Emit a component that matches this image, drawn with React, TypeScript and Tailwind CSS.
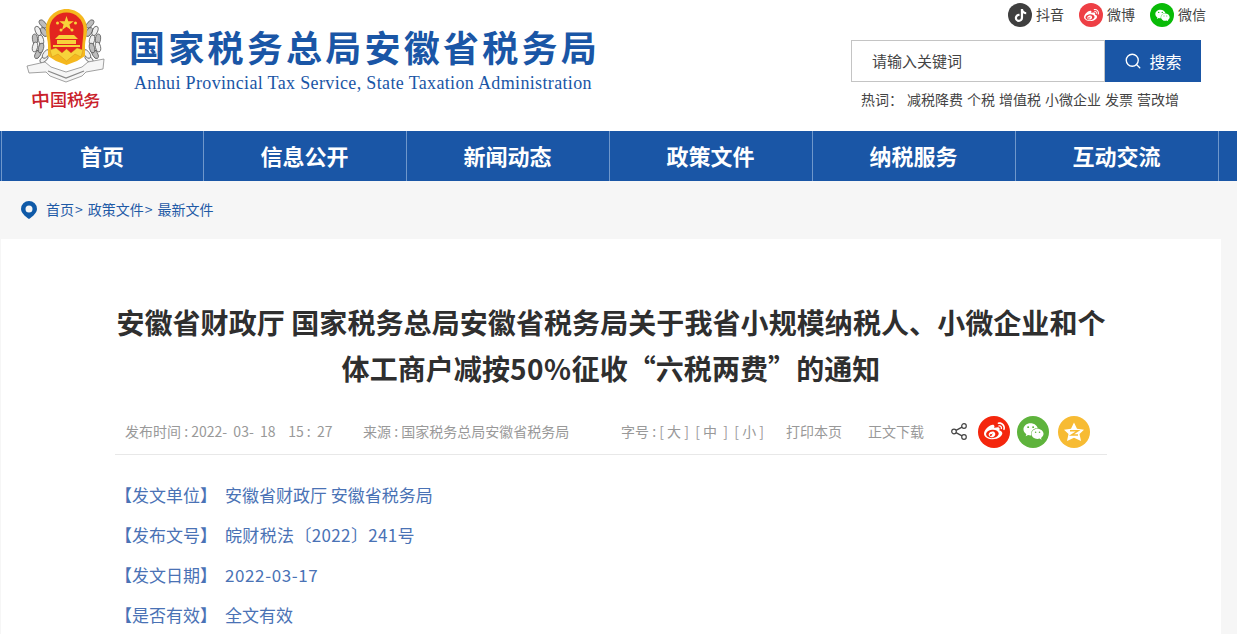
// App.tsx
import { Search } from 'lucide-react';
import { FaTiktok, FaWeibo, FaWeixin } from 'react-icons/fa';

const font = "font-['Noto_Sans_CJK_SC','Liberation_Sans',sans-serif]";

const navItems = ['首页', '信息公开', '新闻动态', '政策文件', '纳税服务', '互动交流'];
const hotWords = ['减税降费', '个税', '增值税', '小微企业', '发票', '营改增'];
const metaRows = [
  ['【发文单位】', '安徽省财政厅 安徽省税务局', ''],
  ['【发布文号】', '皖财税法〔2022〕241号', 'tracking-[0.35px]'],
  ['【发文日期】', '2022-03-17', 'tracking-[0.6px]'],
  ['【是否有效】', '全文有效', ''],
];

// wreath leaves, mirrored around the badge
const leaves = [
  [17, 17, -40], [12, 24, -22], [9, 32, -6], [9, 40, 10], [12, 47, 28], [18, 52, 48],
  [18, 25, -30], [15, 33, -10], [15, 41, 12], [20, 47, 35],
];

function Emblem() {
  return (
    <svg width="82" height="106" viewBox="0 0 82 106" className="block">
      {/* wreath */}
      {leaves.map(([x, y, r], i) => (
        <g key={i}>
          <ellipse cx={x} cy={y} rx="2.600" ry="5" transform={`rotate(${r} ${x} ${y})`} fill={i % 2 ? '#efefef' : '#bdbdbd'} stroke="#4a4a4a" strokeWidth="0.700" />
          <ellipse cx={81 - x} cy={y} rx="2.600" ry="5" transform={`rotate(${-r} ${81 - x} ${y})`} fill={i % 2 ? '#efefef' : '#bdbdbd'} stroke="#4a4a4a" strokeWidth="0.700" />
        </g>
      ))}
      {/* ribbon */}
      <path d="M1 59 L19 55 L25 60 L40 65 L56 60 L62 55 L78 52 L77 62 L60 65 L56 69 L40 75 L24 69 L20 65 L3 66 Z" fill="#f6f6f6" stroke="#8a8a8a" strokeWidth="0.800" />
      <path d="M22 64 L40 71 L58 64" fill="none" stroke="#888" strokeWidth="1.300" />
      {/* badge */}
      <path d="M40.500 2 C29 2 20 11 20 22 C20 29 22 34 22 38 L22 49 L30 54 L40.500 58 L51 54 L59 49 L59 38 C59 34 61 29 61 22 C61 11 52 2 40.500 2 Z" fill="#f5b81e" />
      <path d="M40.500 5.500 C31 5.500 23.500 13 23.500 22 C23.500 30 25 36 25 46 L56 46 C56 36 57.500 30 57.500 22 C57.500 13 50 5.500 40.500 5.500 Z" fill="#e3241f" />
      <polygon points="40.500,9 42.300,14.300 47.800,14.300 43.400,17.600 45,22.900 40.500,19.700 36,22.900 37.600,17.600 33.200,14.300 38.700,14.300" fill="#f7d23a" />
      <circle cx="31.500" cy="16" r="1.500" fill="#f7d23a" />
      <circle cx="49.500" cy="16" r="1.500" fill="#f7d23a" />
      <circle cx="35" cy="23" r="1.500" fill="#f7d23a" />
      <circle cx="46" cy="23" r="1.500" fill="#f7d23a" />
      {/* gate */}
      <path d="M33 28 L48 28 L52 32 L29 32 Z M31 33 L50 33 L50 37 L31 37 Z M27 38 L54 38 L54 40 L27 40 Z" fill="#f7d23a" />
      <path d="M24 43 L30 41 L36 46 L40.500 42 L45 46 L51 41 L57 43 L55 50 L49 47 L40.500 54 L32 47 L26 50 Z" fill="#f7d23a" stroke="#c9861a" strokeWidth="0.400" />
      {/* calligraphy */}
      <g fontFamily="Noto Sans CJK SC, sans-serif" fontWeight="500" fill="#c9202a">
        <text x="5" y="100" fontSize="19" transform="rotate(-4 14 92)">中</text>
        <text x="24" y="99" fontSize="17">国</text>
        <text x="41" y="99" fontSize="17" transform="rotate(-6 49 92)">税</text>
        <text x="57" y="100" fontSize="17" transform="rotate(-6 65 92)">务</text>
      </g>
    </svg>
  );
}

function PinIcon() {
  return (
    <svg width="16" height="18" viewBox="0 0 16 18">
      <path fillRule="evenodd" d="M8 0a8 8 0 0 1 8 8c0 3.600-4 7.400-8 10C4 15.400 0 11.600 0 8a8 8 0 0 1 8-8Zm0 4.500a3.500 3.500 0 1 0 0 7 3.500 3.500 0 0 0 0-7Z" fill="#0f5aa8" />
    </svg>
  );
}

function ShareIcon() {
  return (
    <svg width="16" height="17" viewBox="0 0 16 17" fill="none" stroke="#444" strokeWidth="1.200">
      <circle cx="3" cy="8.500" r="2.300" />
      <circle cx="13" cy="3" r="2.300" />
      <circle cx="13" cy="14" r="2.300" />
      <path d="M5 7.400 11 4.100M5 9.600 11 12.900" />
    </svg>
  );
}

function QzoneIcon() {
  return (
    <svg width="22" height="22" viewBox="0 0 22 22">
      <path d="M11 1.500 14 7.800 21 8.700 16.500 13 18 20 11 16.700 4 20 5.500 13 1 8.700 8 7.800Z" fill="#fff" />
      <path d="M7 9.800H15L8.500 14H15" fill="none" stroke="#f7bb33" strokeWidth="1.500" />
    </svg>
  );
}

export default function App() {
  return (
    <div className={`h-[634px] overflow-hidden bg-[#f6f6f6] ${font}`}>
      {/* Header */}
      <header className="flex h-[131px] justify-between bg-white">
        <div className="flex pl-[26px] pt-[7px]">
          <Emblem />
          <div className="ml-[21px] pt-[15px]">
            <h1 className="text-[36px] leading-[48px] font-bold tracking-[3.250px] text-[#1a56a6]">国家税务总局安徽省税务局</h1>
            <p className="mt-[1px] pl-[5px] font-['Liberation_Serif',serif] text-[18px] leading-[24px] tracking-[0.35px] text-[#1a56a6]">
              Anhui Provincial Tax Service, State Taxation Administration
            </p>
          </div>
        </div>

        <div className="w-[386px]">
          <div className="flex justify-end gap-[15px] pt-[3px] pr-[31px] text-[14px] leading-[20px] text-[#444]">
            <span className="flex items-center gap-[4px]">
              <span className="flex size-[24px] items-center justify-center rounded-full bg-[#3f3f3f] text-white"><FaTiktok size={13} /></span>
              <span className="pb-[2px]">抖音</span>
            </span>
            <span className="flex items-center gap-[4px]">
              <span className="flex size-[24px] items-center justify-center rounded-full bg-[#ee3f45] text-white"><FaWeibo size={15} /></span>
              <span className="pb-[2px]">微博</span>
            </span>
            <span className="flex items-center gap-[4px]">
              <span className="flex size-[24px] items-center justify-center rounded-full bg-[#09bb07] text-white"><FaWeixin size={15} /></span>
              <span className="pb-[2px]">微信</span>
            </span>
          </div>
          <div className="mt-[13px] flex h-[42px] w-[350px]">
            <div className="flex flex-1 items-center border border-[#c4c4c4] pl-[20px] text-[15px] text-[#444]">请输入关键词</div>
            <div className="flex w-[96px] items-center justify-center gap-[7px] bg-[#1a56a6] text-[16px] text-white">
              <Search size={18} strokeWidth={1.800} />
              搜索
            </div>
          </div>
          <div className="mt-[7px] flex pl-[10px] text-[14px] leading-[20px] text-[#444]">
            <span className="mr-[4px]">热词：</span>
            <span className="flex gap-[4px]">
              {hotWords.map(w => <span key={w}>{w}</span>)}
            </span>
          </div>
        </div>
      </header>

      {/* Nav */}
      <nav className="flex h-[50px] bg-[#1a56a6] pl-[1px]">
        {navItems.map((item, i) => (
          <div key={item} className={`flex items-center justify-center border-l border-[#6f97cb] pr-[1px] pb-[2px] text-[22px] font-bold text-white ${i === 0 ? 'w-[202px]' : 'w-[203px]'}`}>
            {item}
          </div>
        ))}
        <div className="w-[18px] border-l border-[#6f97cb]" />
      </nav>

      {/* Breadcrumb */}
      <div className="flex h-[58px] items-center pl-[21px] text-[14px] text-[#1f5aa6]">
        <PinIcon />
        <span className="ml-[9px] flex pb-[2px]">
          首页<span className="mr-[5px] ml-[1px]">&gt;</span>政策文件<span className="mr-[5px] ml-[1px]">&gt;</span>最新文件
        </span>
      </div>

      {/* Article */}
      <main className="ml-[1px] h-[395px] w-[1220px] bg-white pt-[60px]">
        <div className="ml-[114px] w-[992px]">
          <h2 className="text-center text-[28px] leading-[46px] font-bold tracking-[0.08px] text-[#2f2f2f]">
            安徽省财政厅 国家税务总局安徽省税务局关于我省小规模纳税人、小微企业和个
            <br />
            体工商户减按<span className="tracking-[0.5px]">50%</span>征收“六税两费”的通知
          </h2>

          <div className="mt-[24px] flex h-[40px] items-center border-b border-[#e8e8e8] pb-[6px] pl-[10px] text-[14px] text-[#999]">
            <span className="w-[238px] whitespace-pre">发布时间 : 2022-  03-  18    15 :  27</span>
            <span className="w-[258px]">来源 : 国家税务总局安徽省税务局</span>
            <span className="w-[165px] whitespace-pre">字号 : [ 大 ]  [ 中  ]  [ 小 ]</span>
            <span className="w-[82px]">打印本页</span>
            <span className="w-[83px]">正文下载</span>
            <ShareIcon />
            <span className="ml-[11px] flex size-[32px] items-center justify-center rounded-full bg-[#f4260d] text-white"><FaWeibo size={21} /></span>
            <span className="ml-[7px] flex size-[32px] items-center justify-center rounded-full bg-[#5eb33c] text-white"><FaWeixin size={21} /></span>
            <span className="ml-[9px] flex size-[32px] items-center justify-center rounded-full bg-[#f7bb33]"><QzoneIcon /></span>
          </div>

          <div className="pt-[20px] text-[17px] leading-[40px] text-[#4a72b5]">
            {metaRows.map(([label, value, extra]) => (
              <div key={label} className="flex">
                <span className="w-[110px]">{label}</span>
                <span className={extra}>{value}</span>
              </div>
            ))}
          </div>
        </div>
      </main>
    </div>
  );
}
